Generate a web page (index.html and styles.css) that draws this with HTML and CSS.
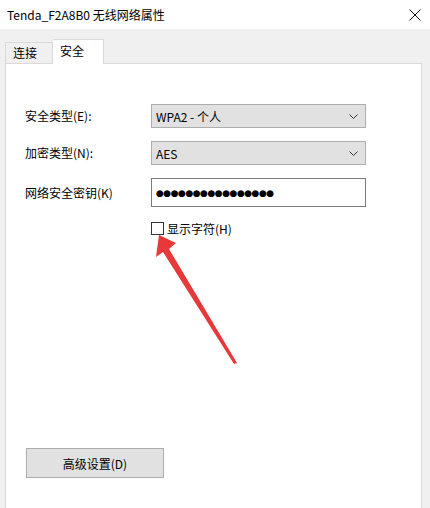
FILE: index.html
```html
<!DOCTYPE html>
<html lang="zh-CN">
<head>
<meta charset="utf-8">
<title>Tenda_F2A8B0 无线网络属性</title>
<link rel="stylesheet" href="styles.css">
</head>
<body>
<div class="window">
  <div class="titlebar">
    <span class="title">Tenda_F2A8B0 无线网络属性</span>
    <svg class="close" width="12" height="12" viewBox="0 0 12 12"><path d="M0.5 0.5 L11.5 11.5 M11.5 0.5 L0.5 11.5" stroke="#111" stroke-width="1" fill="none"/></svg>
  </div>
  <div class="tabs">
    <div class="tab">连接</div>
    <div class="tab active">安全</div>
  </div>
  <div class="panel">
    <div class="form">
      <label class="label">安全类型(E):</label>
      <div class="select"><span>WPA2 - 个人</span><svg class="chev" width="9" height="5" viewBox="0 0 9 5"><path d="M0.5 0.5 L4.5 4.5 L8.5 0.5" stroke="#333" fill="none"/></svg></div>
      <label class="label">加密类型(N):</label>
      <div class="select"><span>AES</span><svg class="chev" width="9" height="5" viewBox="0 0 9 5"><path d="M0.5 0.5 L4.5 4.5 L8.5 0.5" stroke="#333" fill="none"/></svg></div>
      <label class="label">网络安全密钥(K)</label>
      <div class="input"><span class="dots">●●●●●●●●●●●●●●●●</span></div>
      <span></span>
      <div class="check"><span class="box"></span><span>显示字符(H)</span></div>
    </div>
    <div class="spacer"></div>
    <button class="btn">高级设置(D)</button>
  </div>
  <svg class="arrow" width="430" height="508" viewBox="0 0 430 508">
    <polygon points="159,235 176,243 169,249 237,363 234,364 163,252 156,257" fill="#e8393a"/>
  </svg>
</div>
</body>
</html>
```
FILE: styles.css
```css
* { box-sizing: border-box; }
html, body { margin: 0; padding: 0; }
body {
  width: 430px;
  height: 508px;
  overflow: hidden;
  background: #f0f0f0;
  font-family: "Noto Sans CJK SC", "Noto Sans", sans-serif;
  font-size: 12px;
  color: #000;
}
.window { position: relative; height: 508px; }
.titlebar {
  height: 29px;
  background: #fff;
  display: flex;
  align-items: center;
  justify-content: space-between;
  padding: 0 9px 0 7px;
}
.title { font-size: 12px; line-height: 16px; }
.tabs {
  display: flex;
  align-items: flex-end;
  height: 34px;
  padding-left: 5px;
}
.tab {
  height: 21px;
  width: 48px;
  border: 1px solid #d9d9d9;
  border-bottom: none;
  background: #f0f0f0;
  padding-left: 7px;
  line-height: 19px;
}
.tab.active {
  height: 25px;
  width: 51px;
  background: #fff;
  border-left: none;
  margin-bottom: -1px;
  position: relative;
  z-index: 1;
  line-height: 21px;
}
.panel {
  margin-left: 5px;
  width: 417px;
  height: 470px;
  background: #fff;
  border: 1px solid #d9d9d9;
  padding: 40px 0 0 19px;
  display: flex;
  flex-direction: column;
}
.form {
  display: grid;
  grid-template-columns: 126px 215px;
  row-gap: 13px;
  align-items: center;
}
.label { line-height: 16px; }
.select {
  height: 24px;
  background: #e1e1e1;
  border: 1px solid #adadad;
  display: flex;
  align-items: center;
  justify-content: space-between;
  padding: 0 7px 0 4px;
}
.chev { margin-top: 1px; }
.input {
  height: 29px;
  border: 1px solid #7a7a7a;
  background: #fff;
  display: flex;
  align-items: center;
  padding-left: 4px;
}
.dots {
  font-family: "DejaVu Sans", sans-serif;
  font-size: 9px;
  letter-spacing: -0.5px;
  line-height: 10px;
}
.check {
  display: flex;
  align-items: center;
  gap: 3px;
}
.box {
  width: 13px;
  height: 13px;
  border: 1px solid #333;
  background: #fff;
}
.spacer { flex: 0 0 211px; }
.btn {
  width: 138px;
  height: 30px;
  margin-left: 1px;
  background: #e1e1e1;
  border: 1px solid #adadad;
  font-family: inherit;
  font-size: 12px;
  color: #000;
  padding: 0;
}
.arrow { position: absolute; left: 0; top: 0; pointer-events: none; }
```
